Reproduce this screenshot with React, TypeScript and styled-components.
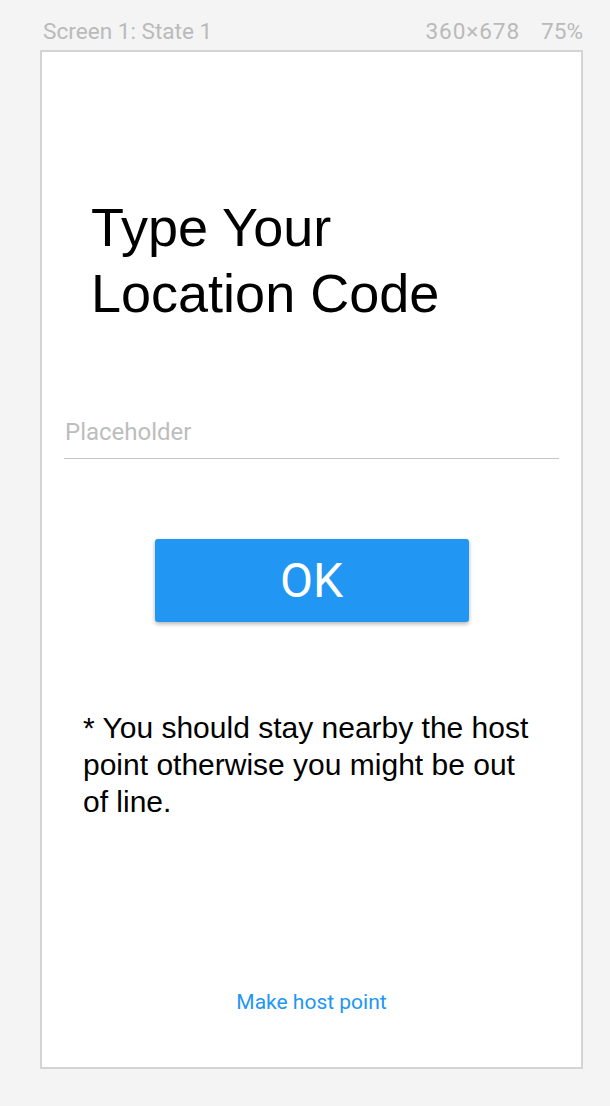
import styled, { createGlobalStyle } from "styled-components";

function App() {
  return (
    <Page>
      <GlobalStyle />
      <Header>
        <HeaderText>Screen 1: State 1</HeaderText>
        <HeaderMeta>
          <HeaderText $spacing={0.9}>360×678</HeaderText>
          <HeaderText>75%</HeaderText>
        </HeaderMeta>
      </Header>
      <Frame>
        <Title>
          Type Your
          <br />
          Location Code
        </Title>
        <CodeInput type="text" placeholder="Placeholder" />
        <OkButton type="button">OK</OkButton>
        <Note>
          * You should stay nearby the host point otherwise you might be out of
          line.
        </Note>
        <HostLink href="#">Make host point</HostLink>
      </Frame>
    </Page>
  );
}

export default App;

const Page = styled.div`
  width: 610px;
  height: 1106px;
  padding: 0 27px 0 40px;
  display: flex;
  flex-direction: column;
  background: #f4f4f4;
`;

const Header = styled.div`
  height: 50px;
  padding: 19px 0 0 3px;
  display: flex;
  justify-content: space-between;
  align-items: flex-start;
`;

const HeaderMeta = styled.div`
  display: flex;
  gap: 21px;
`;

const HeaderText = styled.span<{ $spacing?: number }>`
  font-family: Roboto, "Noto Sans", sans-serif;
  font-size: 22.6px;
  line-height: 26px;
  letter-spacing: ${(p) => p.$spacing ?? 0}px;
  color: #bababa;
`;

const Frame = styled.div`
  width: 543px;
  height: 1019px;
  border: 2px solid #d4d4d4;
  background: #ffffff;
  display: flex;
  flex-direction: column;
  padding-top: 142px;
`;

const Title = styled.h1`
  margin: 0;
  padding-left: 49px;
  font-family: "Liberation Sans", Arial, sans-serif;
  font-weight: 400;
  font-size: 54px;
  line-height: 66px;
  color: #000000;
`;

const CodeInput = styled.input`
  box-sizing: content-box;
  margin: 92px 22px 0 22px;
  height: 28px;
  padding: 0 0 12px 1px;
  border: none;
  border-bottom: 1px solid #c6c6c6;
  outline: none;
  background: transparent;
  font-family: Roboto, sans-serif;
  font-size: 24px;
  line-height: 28px;
  color: #333333;

  &::placeholder {
    color: #bdbdbd;
  }
`;

const OkButton = styled.button`
  align-self: center;
  margin-top: 80px;
  width: 314px;
  height: 83px;
  border: none;
  border-radius: 3px;
  background: #2196f3;
  box-shadow: 0 2px 4px rgba(0, 0, 0, 0.3);
  display: flex;
  align-items: center;
  justify-content: center;
  font-family: Roboto, sans-serif;
  font-size: 48px;
  font-weight: 400;
  color: #ffffff;
  cursor: pointer;
`;

const Note = styled.p`
  margin: 87px 0 0 0;
  padding: 0 43px 0 41px;
  font-family: "Liberation Sans", Arial, sans-serif;
  font-size: 30px;
  line-height: 37px;
  color: #000000;
`;

const HostLink = styled.a`
  margin-top: auto;
  margin-bottom: 52px;
  align-self: center;
  font-family: Roboto, sans-serif;
  font-size: 21px;
  line-height: 25px;
  color: #2196f3;
  text-decoration: none;
`;

const GlobalStyle = createGlobalStyle`
  * {
    box-sizing: border-box;
  }

  body {
    margin: 0;
    background: #f4f4f4;
  }
`;
